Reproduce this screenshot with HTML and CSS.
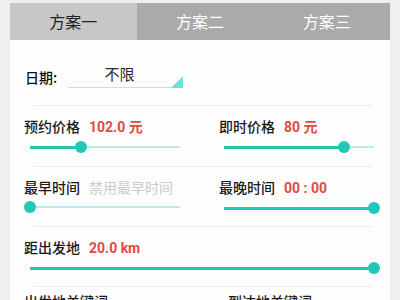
FILE: index.html
```html
<!DOCTYPE html>
<html lang="zh-CN">
<head>
<meta charset="utf-8">
<title>方案</title>
<link rel="stylesheet" href="styles.css">
</head>
<body>
<div class="card">
  <div class="tabs">
    <div class="tab active">方案一</div>
    <div class="tab">方案二</div>
    <div class="tab">方案三</div>
  </div>
  <div class="content">
    <div class="date-row">
      <span class="date-label">日期:</span>
      <div class="dropdown">不限</div>
    </div>
    <div class="divider"></div>

    <div class="row row-first cols">
      <div class="cell">
        <div class="label">预约价格<span class="value">102.0 元</span></div>
        <div class="slider"><div class="track"><div class="fill" style="width:34%"></div><span class="thumb" style="left:34%"></span></div></div>
      </div>
      <div class="cell">
        <div class="label">即时价格<span class="value">80 元</span></div>
        <div class="slider"><div class="track"><div class="fill" style="width:80%"></div><span class="thumb" style="left:80%"></span></div></div>
      </div>
    </div>
    <div class="divider"></div>

    <div class="row cols">
      <div class="cell">
        <div class="label">最早时间<span class="value disabled">禁用最早时间</span></div>
        <div class="slider"><div class="track"><div class="fill" style="width:0%"></div><span class="thumb" style="left:0%"></span></div></div>
      </div>
      <div class="cell">
        <div class="label">最晚时间<span class="value">00 : 00</span></div>
        <div class="slider"><div class="track"><div class="fill" style="width:100%"></div><span class="thumb" style="left:100%"></span></div></div>
      </div>
    </div>
    <div class="divider"></div>

    <div class="row">
      <div class="label">距出发地<span class="value">20.0 km</span></div>
      <div class="slider"><div class="track"><div class="fill" style="width:100%"></div><span class="thumb" style="left:100%"></span></div></div>
    </div>
    <div class="divider"></div>

    <div class="row-keywords cols">
      <div class="label">出发地关键词</div>
      <div class="label kw-right">到达地关键词</div>
    </div>
  </div>
</div>
</body>
</html>
```
FILE: styles.css
```css
* { box-sizing: border-box; }

html, body {
  margin: 0;
  padding: 0;
  background: #efefef;
  font-family: "Roboto", "Noto Sans CJK SC", sans-serif;
  color: #1c1c1c;
}

.card {
  margin: 3px 10px 0;
  height: 297px;
  overflow: hidden;
  background: #fdfdfd;
}

.tabs {
  display: flex;
  height: 37px;
  background: #aaaaaa;
}

.tab {
  flex: 1;
  text-align: center;
  line-height: 37px;
  font-size: 16px;
  color: #ffffff;
  font-family: "Noto Sans CJK SC", sans-serif;
}

.tab.active {
  background: #c7c7c7;
  color: #222222;
}

.content {
  padding: 0 10px 0 14px;
}

.date-row {
  display: flex;
  align-items: flex-start;
  padding: 21px 0 15px 1px;
}

.date-label {
  width: 43px;
  margin-top: 3px;
  line-height: 26px;
  font-size: 14px;
  font-weight: 500;
  color: #111111;
  font-family: "Noto Sans CJK SC", sans-serif;
}

.dropdown {
  position: relative;
  width: 115px;
  height: 27px;
  line-height: 25px;
  border-bottom: 1px solid #b4ece5;
  text-align: center;
  padding-right: 12px;
  font-size: 15px;
  color: #2a2a2a;
  font-family: "Noto Sans CJK SC", sans-serif;
}

.dropdown::after {
  content: "";
  position: absolute;
  right: 0;
  bottom: -1px;
  width: 0;
  height: 0;
  border-left: 12px solid transparent;
  border-bottom: 12px solid #6fdfd3;
}

.divider {
  height: 1px;
  margin: 0 8px 0 10px;
  background: #ececec;
}

.row {
  padding: 12px 0 12px;
}

.row-first {
  padding-bottom: 13px;
}

.cols {
  display: grid;
  grid-template-columns: 162px 162px;
  column-gap: 32px;
}

.label {
  font-size: 14px;
  line-height: 16px;
  white-space: nowrap;
  font-weight: 500;
  color: #1a1a1a;
  font-family: "Noto Sans CJK SC", sans-serif;
}

.cols .cell + .cell .label { padding-left: 1px; }

.value {
  margin-left: 9px;
  font-family: "Roboto", "Noto Sans CJK SC", sans-serif;
  font-weight: 700;
  color: #df4b40;
}

.value.disabled {
  font-weight: 400;
  color: #cbcbcb;
  font-family: "Noto Sans CJK SC", sans-serif;
}

.slider {
  margin-top: 6px;
  height: 12px;
  padding: 0 6px;
  display: flex;
  align-items: center;
}

.track {
  position: relative;
  flex: 1;
  height: 2px;
  background: #b9eee8;
}

.fill {
  height: 3px;
  margin-top: -0.5px;
  background: #22c6b4;
}

.thumb {
  position: absolute;
  top: 50%;
  width: 12px;
  height: 12px;
  margin: -6px 0 0 -6px;
  border-radius: 50%;
  background: #22c8b5;
}

.row-keywords {
  padding-top: 6px;
}

.kw-right {
  padding-left: 10px;
}
```
